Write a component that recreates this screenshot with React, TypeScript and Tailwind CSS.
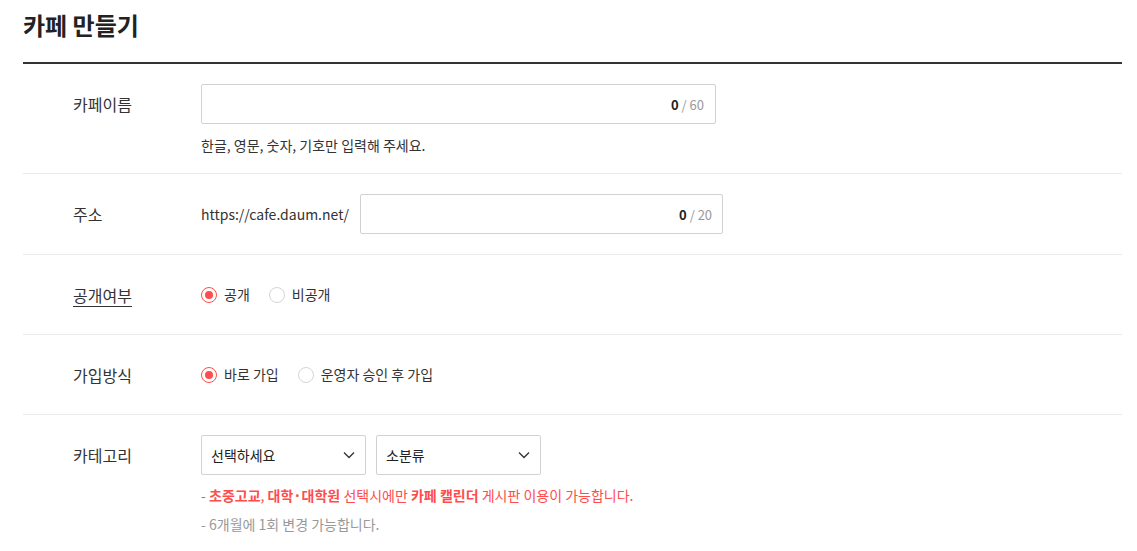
const FONT = "font-['Noto_Sans_CJK_KR','Noto_Sans',sans-serif]";

function Radio({ checked, label }: { checked?: boolean; label: string }) {
  return (
    <label className="flex items-center gap-[7px] mr-[19px]">
      {checked ? (
        <span className="w-4 h-4 rounded-full border border-[#ff4c4c] flex items-center justify-center">
          <span className="w-2 h-2 rounded-full bg-[#ff4c4c]" />
        </span>
      ) : (
        <span className="w-4 h-4 rounded-full border border-[#d5d5d5] bg-white" />
      )}
      <span className="text-[14px] text-[#333]">{label}</span>
    </label>
  );
}

function Counter({ max }: { max: number }) {
  return (
    <span className="text-[13px] leading-none">
      <b className="text-[#222] font-bold">0</b>
      <span className="text-[#999]"> / {max}</span>
    </span>
  );
}

function Select({ text }: { text: string }) {
  return (
    <div className="w-[165px] h-10 border border-[#d2d2d2] rounded-[2px] flex items-center justify-between pl-[9px] pr-[10px]">
      <span className="text-[14px] text-[#222]">{text}</span>
      <svg width="12" height="8" viewBox="0 0 12 8" fill="none">
        <path d="M1 1.5l5 5 5-5" stroke="#333" strokeWidth="1.3" />
      </svg>
    </div>
  );
}

function Label({ text, underline, h = "h-10" }: { text: string; underline?: boolean; h?: string }) {
  return (
    <div className={`w-[178px] pl-[50px] ${h} flex items-center shrink-0`}>
      <span className={`text-[16px] text-[#333] ${underline ? "underline underline-offset-4" : ""}`}>{text}</span>
    </div>
  );
}

function RadioRow({ label, children, underline }: { label: string; children: React.ReactNode; underline?: boolean }) {
  return (
    <div className="flex border-b border-[#ebebeb] py-5">
      <Label text={label} underline={underline} h="h-[39px]" />
      <div className="flex items-center h-[39px]">{children}</div>
    </div>
  );
}

export default function App() {
  return (
    <div className={`${FONT} bg-white w-[1137px] h-[551px] overflow-hidden pl-[23px] pr-[15px] pt-[8px]`}>
      <h1 className="text-[24px] font-bold text-[#222] leading-[34px] pb-[20px] border-b-2 border-[#333]">
        카페 만들기
      </h1>

      <div className="flex border-b border-[#ebebeb] pt-5 pb-[18px]">
        <Label text="카페이름" />
        <div>
          <div className="w-[515px] h-10 border border-[#d2d2d2] rounded-[2px] flex items-center justify-end pr-[11px]">
            <Counter max={60} />
          </div>
          <p className="text-[14px] text-[#333] mt-[11px] leading-5">한글, 영문, 숫자, 기호만 입력해 주세요.</p>
        </div>
      </div>

      <div className="flex border-b border-[#ebebeb] py-5">
        <Label text="주소" />
        <div className="flex items-center">
          <span className="text-[14px] text-[#333] mr-[11px]">https://cafe.daum.net/</span>
          <div className="w-[363px] h-10 border border-[#d2d2d2] rounded-[2px] flex items-center justify-end pr-[10px]">
            <Counter max={20} />
          </div>
        </div>
      </div>

      <RadioRow label="공개여부" underline>
        <Radio checked label="공개" />
        <Radio label="비공개" />
      </RadioRow>

      <RadioRow label="가입방식">
        <Radio checked label="바로 가입" />
        <Radio label="운영자 승인 후 가입" />
      </RadioRow>

      <div className="flex pt-5">
        <Label text="카테고리" />
        <div>
          <div className="flex gap-[10px]">
            <Select text="선택하세요" />
            <Select text="소분류" />
          </div>
          <p className="text-[14px] text-[#ff4c4c] mt-[10px] leading-5">
            - <b>초중고교</b>, <b>대학·대학원</b> 선택시에만 <b>카페 캘린더</b> 게시판 이용이 가능합니다.
          </p>
          <p className="text-[14px] text-[#999] mt-[9px] leading-5">- 6개월에 1회 변경 가능합니다.</p>
        </div>
      </div>
    </div>
  );
}
